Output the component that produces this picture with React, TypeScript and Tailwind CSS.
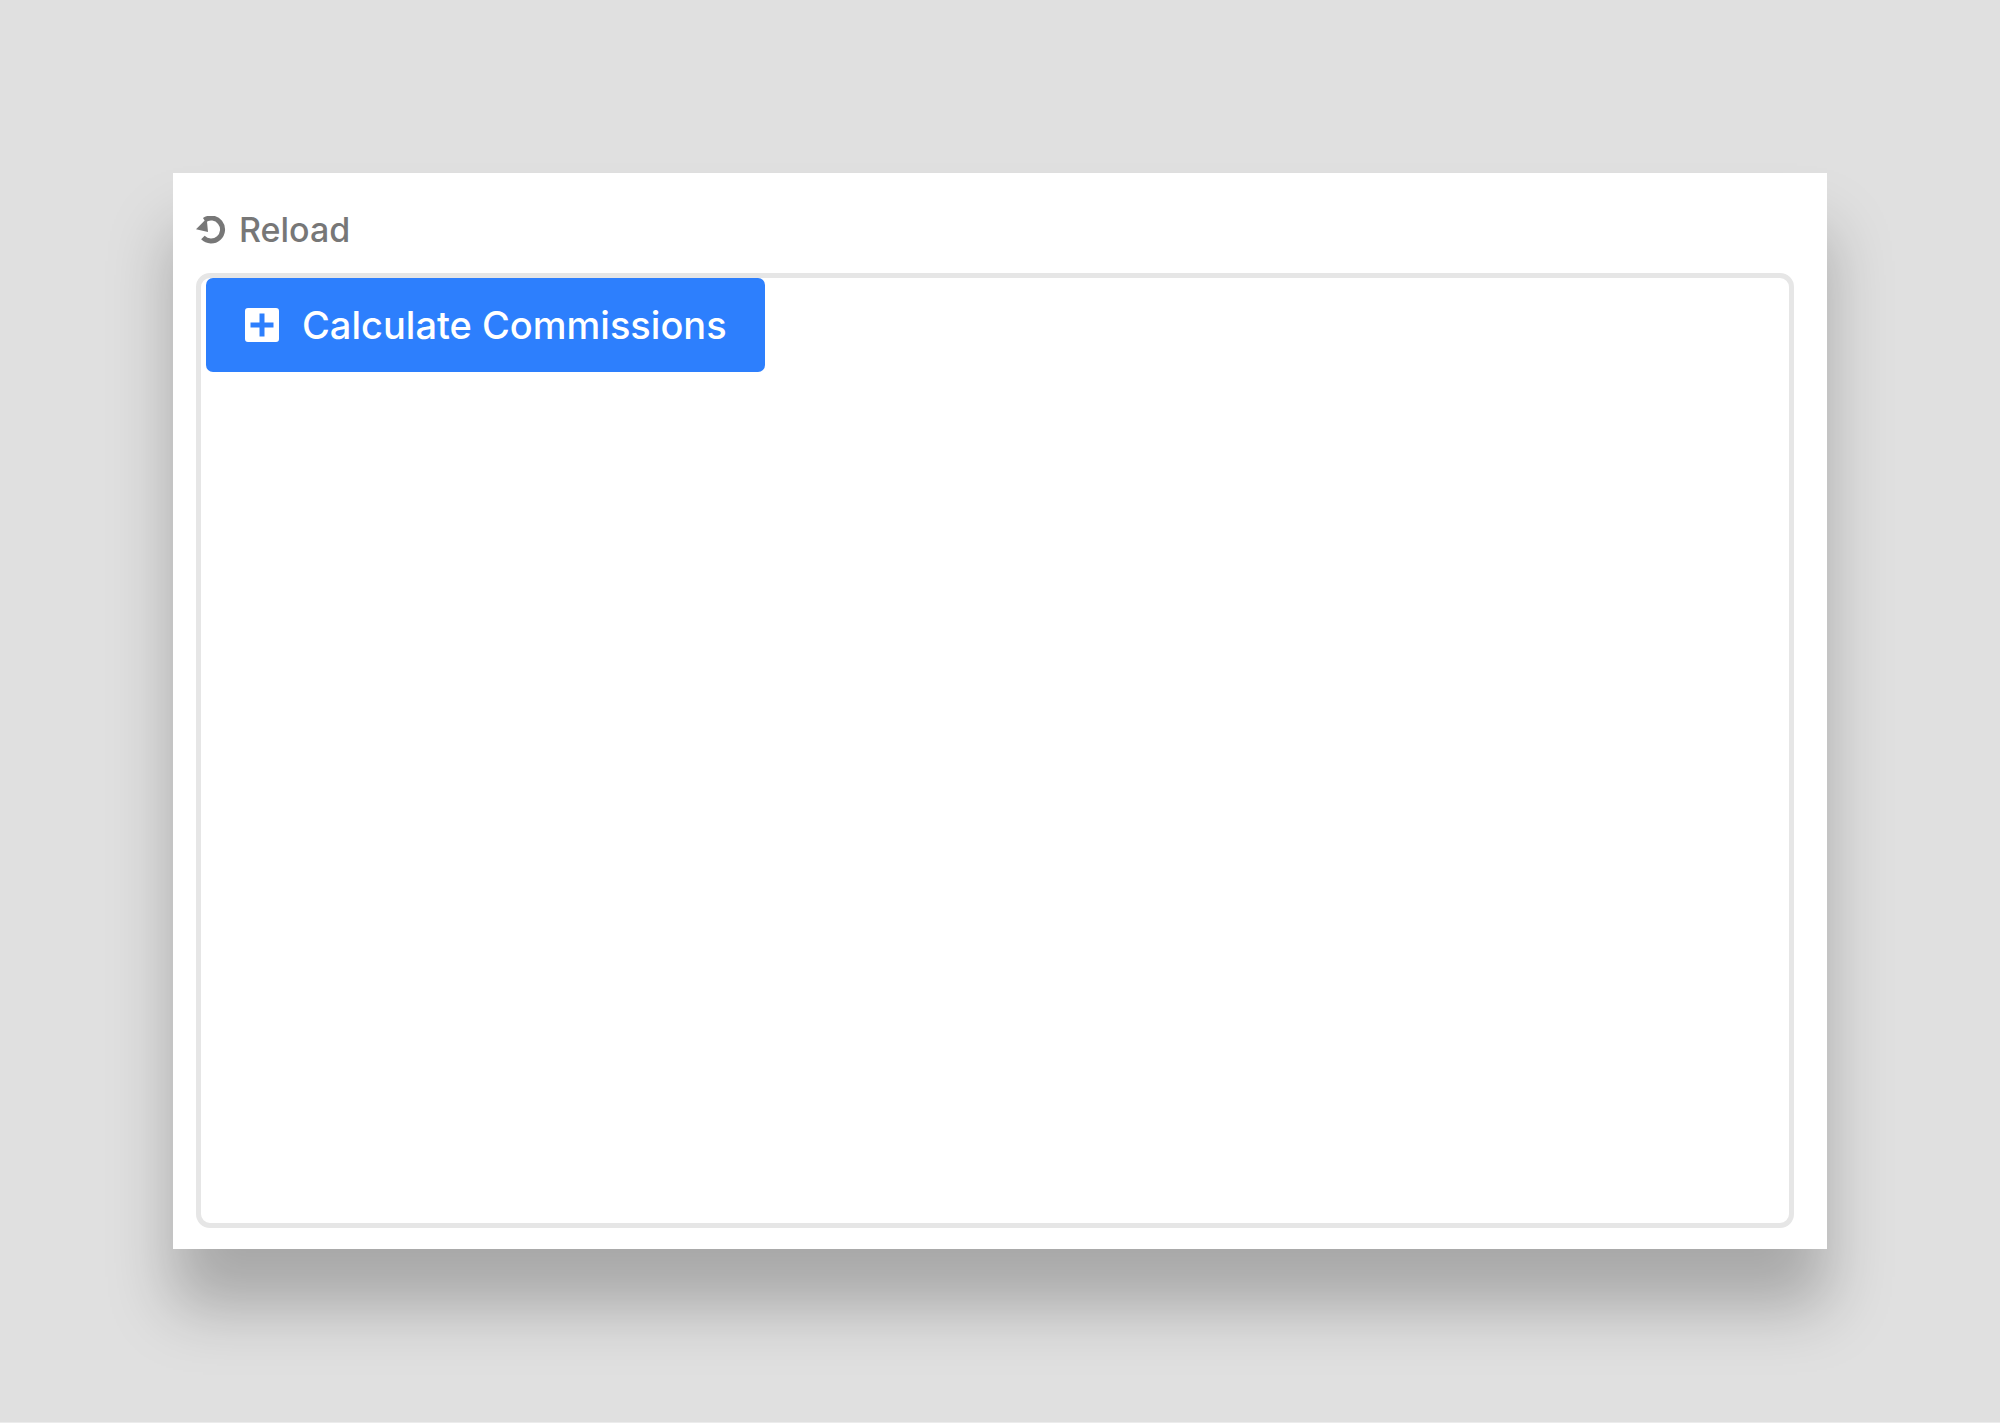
function ReloadIcon() {
  return (
    <svg viewBox="0 0 30 28" className="h-[28px] w-[30px]">
      <path d="M8.4 4.1A11.5 11.5 0 1 1 6.9 21.6" fill="none" stroke="currentColor" strokeWidth="5" />
      <path d="M0 13.3 10.7 2.5 12 16Z" fill="currentColor" />
    </svg>
  );
}

function PlusBoxIcon() {
  return (
    <svg viewBox="0 0 34 34" className="h-[34px] w-[34px]">
      <path
        fillRule="evenodd"
        fill="currentColor"
        d="M3 0h28a3 3 0 0 1 3 3v28a3 3 0 0 1-3 3H3a3 3 0 0 1-3-3V3a3 3 0 0 1 3-3ZM14.5 5.5v9h-9v5h9v9h5v-9h9v-5h-9v-9Z"
      />
    </svg>
  );
}

export default function App() {
  return (
    <div className="flex h-[1423px] flex-col border-b border-[#ececec] bg-[#e0e0e0] px-[173px] pt-[173px] font-['Inter',sans-serif]">
      <div className="flex h-[1076px] flex-col bg-white pb-[21px] pl-[23px] pr-[33px] pt-[36px] shadow-[0_58px_60px_rgba(0,0,0,0.25)]">
        <button className="flex h-[42px] items-center gap-[13px] text-[#777777]">
          <ReloadIcon />
          <span className="text-[34px] font-medium leading-none">Reload</span>
        </button>
        <div className="mt-[22px] flex-1 rounded-[14px] border-[5px] border-[#e6e6e6] pl-[5px]">
          <button className="flex h-[94px] w-[559px] items-center gap-[23px] rounded-[7px] bg-[#2d7ffd] pl-[39px] text-white">
            <PlusBoxIcon />
            <span className="text-[38px] font-medium leading-none">Calculate Commissions</span>
          </button>
        </div>
      </div>
    </div>
  );
}
